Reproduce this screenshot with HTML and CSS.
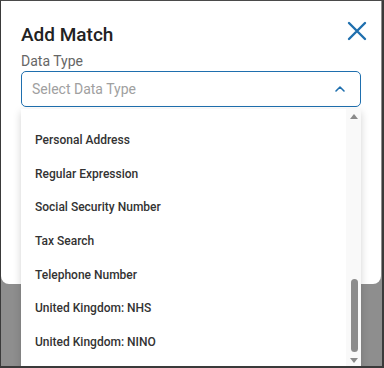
FILE: index.html
```html
<!DOCTYPE html>
<html lang="en">
<head>
  <meta charset="UTF-8">
  <title>Add Match</title>
  <link rel="stylesheet" href="styles.css">
</head>
<body>
  <div class="screen">
    <div class="modal">
      <div class="modal-head">
        <h2>Add Match</h2>
        <button class="close" aria-label="Close">
          <svg width="22" height="22" viewBox="0 0 22 22"><path d="M3 3 L19 19 M19 3 L3 19" stroke="#1f6fae" stroke-width="2.4" stroke-linecap="round"/></svg>
        </button>
      </div>
      <label class="field-label">Data Type</label>
      <div class="select">
        <span class="placeholder">Select Data Type</span>
        <svg width="12" height="8" viewBox="0 0 12 8"><path d="M2 6 L6 2 L10 6" fill="none" stroke="#1f6fae" stroke-width="1.6" stroke-linecap="round" stroke-linejoin="round"/></svg>
      </div>
    </div>

    <!-- open dropdown list -->
    <div class="dropdown">
      <ul class="options">
        <li>Personal Address</li>
        <li>Regular Expression</li>
        <li>Social Security Number</li>
        <li>Tax Search</li>
        <li>Telephone Number</li>
        <li>United Kingdom: NHS</li>
        <li>United Kingdom: NINO</li>
      </ul>
      <div class="scrollbar">
        <span class="arrow up"></span>
        <span class="track"><span class="thumb"></span></span>
        <span class="arrow down"></span>
      </div>
    </div>
  </div>
</body>
</html>
```

FILE: styles.css
```css
* {
  box-sizing: border-box;
}
body {
  margin: 0;
  font-family: Roboto, 'Liberation Sans', sans-serif;
  background: #3a3a3a;
}
.screen {
  position: relative;
  width: 384px;
  height: 368px;
  overflow: hidden;
  background: #8e8e8e;
  border-top: 1px solid #4a4a4a;
  border-left: 1px solid #3a3a3a;
  border-right: 2px solid #3a3a3a;
  border-bottom: 2px solid #3a3a3a;
}
.modal {
  width: 380px;
  height: 283px;
  background: #fff;
  border-radius: 0 0 8px 8px;
  padding: 0 20px 0 20px;
}
.modal-head {
  display: flex;
  justify-content: space-between;
  align-items: center;
  padding-top: 19px;
  height: 48px;
}
h2 {
  margin: 0;
  font-size: 19px;
  font-weight: 500;
  color: #222;
}
.close {
  border: none;
  background: none;
  padding: 0;
  margin-right: -7px;
  margin-top: -7px;
  display: flex;
}
.field-label {
  display: block;
  font-size: 14px;
  color: #666;
  margin-top: 3px;
  line-height: 18px;
}
.select {
  display: flex;
  justify-content: space-between;
  align-items: center;
  height: 36px;
  border: 1.5px solid #1f6fae;
  border-radius: 5px;
  padding: 0 14px 0 10px;
  margin-top: 1px;
}
.placeholder {
  font-size: 14px;
  color: #a0a0a0;
}
.dropdown {
  position: absolute;
  left: 20px;
  top: 108px;
  width: 340px;
  height: 270px;
  background: #fff;
  box-shadow: 0 3px 8px rgba(0,0,0,0.18);
  display: flex;
}
.options {
  flex: 1;
  list-style: none;
  margin: 0;
  padding: 15px 0 0 14px;
}
.options li {
  height: 33.7px;
  line-height: 33.7px;
  font-size: 12px;
  font-weight: 500;
  color: #333;
}
.scrollbar {
  width: 15px;
  background: #f9f9f9;
  display: flex;
  flex-direction: column;
  align-items: center;
  padding: 5px 0 0 1px;
}
.arrow {
  width: 0;
  height: 0;
  border-left: 4px solid transparent;
  border-right: 4px solid transparent;
}
.arrow.up {
  border-bottom: 5px solid #8a8a8a;
}
.arrow.down {
  border-top: 5px solid #8a8a8a;
  margin-top: 1px;
}
.track {
  height: 238px;
  width: 7px;
  display: flex;
  align-items: flex-end;
  padding-bottom: 5px;
}
.thumb {
  width: 7px;
  height: 73px;
  background: #8c8c8c;
  border-radius: 4px;
}
```
